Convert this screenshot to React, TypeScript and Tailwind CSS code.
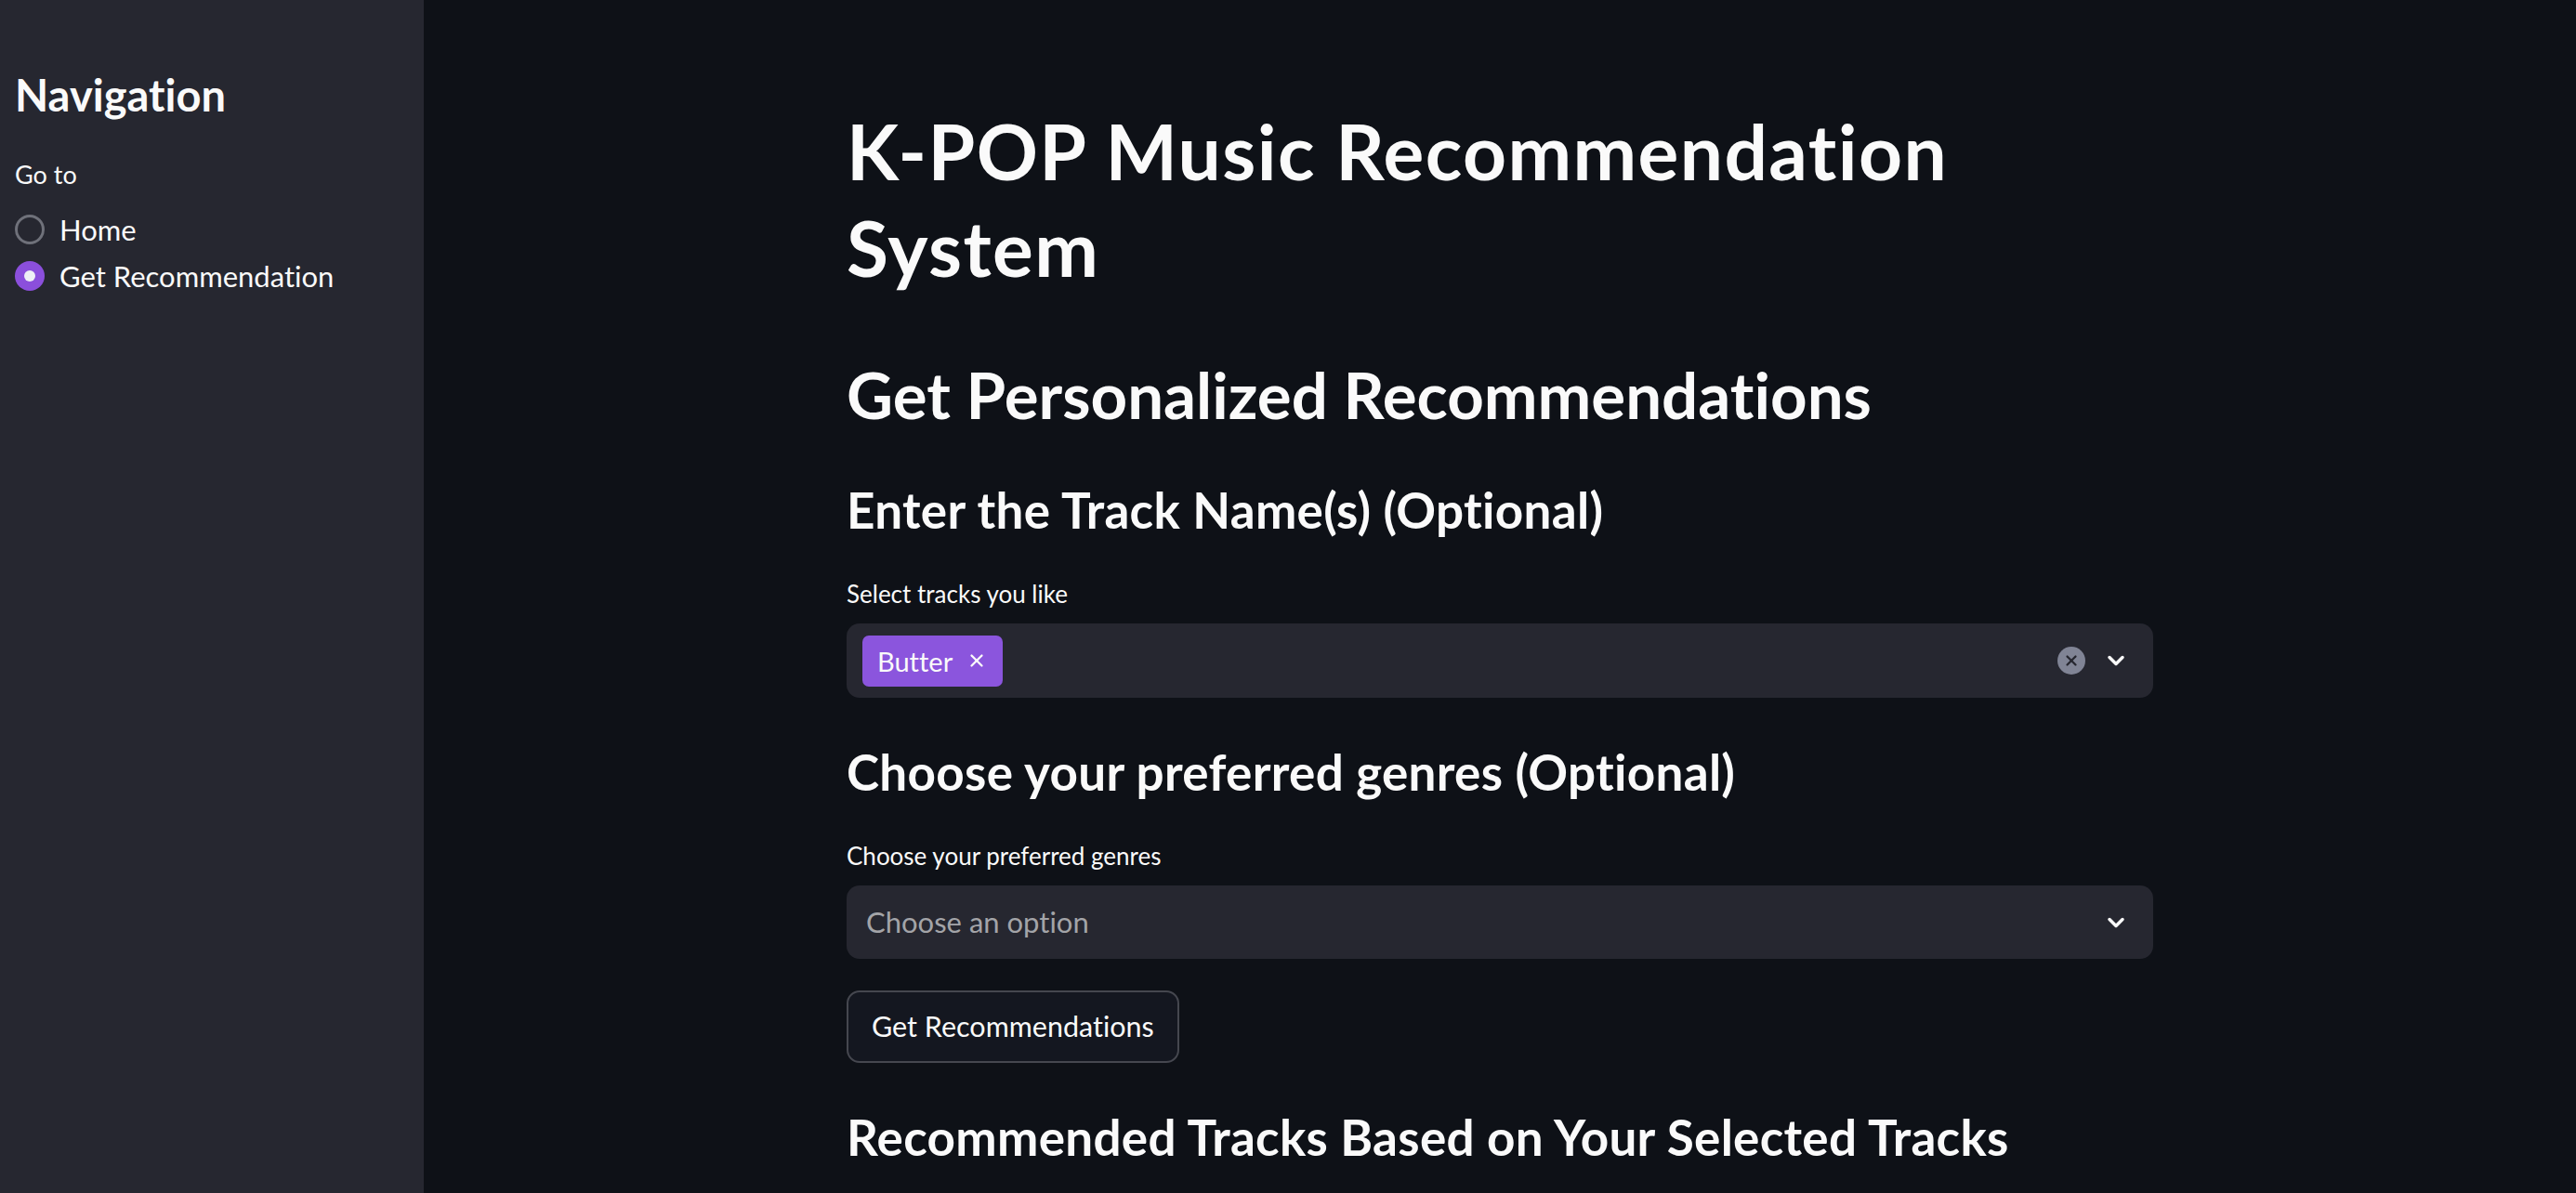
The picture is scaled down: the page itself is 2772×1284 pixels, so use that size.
import { ChevronDown, X } from 'lucide-react'

function Radio({ label, checked }: { label: string; checked?: boolean }) {
  return (
    <div className="flex h-[50px] items-center gap-[16px]">
      {checked ? (
        <div className="flex h-[32px] w-[32px] items-center justify-center rounded-full bg-[#8b4fdc]">
          <div className="h-[12px] w-[12px] rounded-full bg-[#eef0f5]" />
        </div>
      ) : (
        <div className="h-[32px] w-[32px] rounded-full border-[3px] border-[#6f717a] bg-[#262730]" />
      )}
      <span className="text-[31px] leading-[50px] text-[#fafafa]">{label}</span>
    </div>
  )
}

function Heading({ children, className = '' }: { children: React.ReactNode; className?: string }) {
  return (
    <h3 className={`text-[53px] font-bold leading-[70px] tracking-[0.3px] text-[#fafafa] ${className}`}>
      {children}
    </h3>
  )
}

export default function App() {
  return (
    <div className="flex h-[1284px] w-[2772px] overflow-hidden bg-[#0e1117] font-['Lato',sans-serif] text-[#fafafa] [font-variant-ligatures:none]">
      <aside className="w-[456px] shrink-0 bg-[#262730] px-4 pt-[69px]">
        <h2 className="text-[47px] font-bold leading-[66px]">Navigation</h2>
        <div className="mt-[35px] text-[27px] leading-[36px]">Go to</div>
        <div className="mt-[16px] flex flex-col">
          <Radio label="Home" />
          <Radio label="Get Recommendation" checked />
        </div>
      </aside>

      <main className="flex-1">
        <div className="mx-auto w-[1406px] pt-[110px]">
          <h1 className="text-[82px] font-bold leading-[104px] tracking-[1.4px]">
            K-POP Music Recommendation
            <br />
            System
          </h1>
          <h2 className="mt-[62px] text-[69px] font-bold leading-[90px]">Get Personalized Recommendations</h2>

          <Heading className="mt-[44px]">Enter the Track Name(s) (Optional)</Heading>
          <label className="mt-[37px] block text-[26px] leading-[36px]">Select tracks you like</label>
          <div className="mt-[14px] flex h-[80px] items-center rounded-[14px] bg-[#262730] pl-[17px] pr-[26px]">
            <div className="flex h-[55px] items-center gap-[15px] rounded-[7px] bg-[#8b55dd] pl-[16px] pr-[17px]">
              <span className="text-[29px] leading-none">Butter</span>
              <X className="h-[22px] w-[22px]" strokeWidth={2.5} />
            </div>
            <div className="flex-1" />
            <div className="flex h-[30px] w-[30px] items-center justify-center rounded-full bg-[#808495]">
              <X className="h-[18px] w-[18px] text-[#262730]" strokeWidth={3} />
            </div>
            <ChevronDown className="ml-[19px] h-[28px] w-[28px]" strokeWidth={3} />
          </div>

          <Heading className="mt-[45px]">Choose your preferred genres (Optional)</Heading>
          <label className="mt-[37px] block text-[26px] leading-[36px]">Choose your preferred genres</label>
          <div className="mt-[14px] flex h-[79px] items-center rounded-[14px] bg-[#262730] pl-[21px] pr-[26px]">
            <span className="flex-1 text-[31px] text-[#a3a4a8]">Choose an option</span>
            <ChevronDown className="h-[28px] w-[28px]" strokeWidth={3} />
          </div>

          <button className="mt-[34px] flex h-[78px] items-center rounded-[14px] border-2 border-[#45474f] bg-[#141720] px-[25px] text-[30.5px]">
            Get Recommendations
          </button>

          <Heading className="mt-[45px]">Recommended Tracks Based on Your Selected Tracks</Heading>
        </div>
      </main>
    </div>
  )
}
